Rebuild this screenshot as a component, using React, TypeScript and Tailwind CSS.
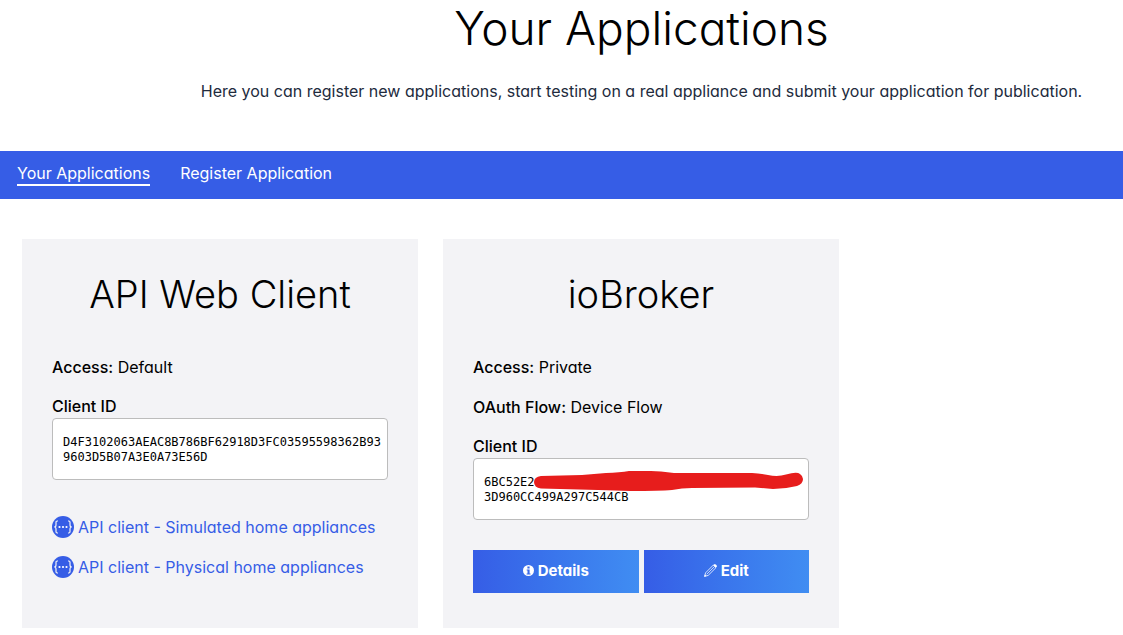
import type { ReactNode } from "react";

function SwaggerIcon() {
  return (
    <svg viewBox="0 0 22 22" className="size-[22px] shrink-0" aria-hidden="true">
      <circle cx="11" cy="11" r="11" fill="#365de6" />
      <g fill="none" stroke="#f3f3f6" strokeWidth="1.2">
        <path d="M6 5H5.2Q4 5 4 6.2V9Q4 11 2.200 11Q4 11 4 13V15.8Q4 17 5.2 17H6" />
        <path d="M16 5h.8q1.2 0 1.2 1.2V9q0 2 1.8 2q-1.8 0-1.8 2v2.8q0 1.2-1.2 1.2h-.8" />
      </g>
      <g fill="#ffffff">
        <circle cx="7.5" cy="11" r="1.1" />
        <circle cx="11" cy="11" r="1.1" />
        <circle cx="14.5" cy="11" r="1.1" />
      </g>
    </svg>
  );
}

function InfoIcon() {
  return (
    <svg viewBox="0 0 11 12" className="h-3 w-[11px]" aria-hidden="true">
      <circle cx="5.5" cy="5.5" r="5.5" fill="#ffffff" />
      <path d="M4.4 1.6h2.2v1.8H4.4zM3.7 4.4h2.9v4h.9v1.2H3.6V8.4h.9V5.6h-.8z" fill="#3a69e8" />
    </svg>
  );
}

function PencilIcon() {
  return (
    <svg viewBox="0 0 13 13" className="size-[13px]" fill="none" stroke="#e7eefe" aria-hidden="true">
      <path d="M.6 12.4l1-3.6L9.4 1l2.6 2.6-7.8 7.8z" strokeWidth=".9" />
      <path d="M2.7 10.3l7.6-7.6" strokeWidth=".8" />
      <path d="M9.200 1.200l2.600 2.600L13 2.500Q13 .5 10.800 0z" fill="#ffffff" stroke="none" />
      <path d="M.2 12.800l.7-2.300 1.600 1.600z" fill="#ffffff" stroke="none" />
    </svg>
  );
}

function Redaction() {
  return (
    <svg viewBox="534 471 269 20" className="absolute top-3 left-[60px] h-5 w-[269px]" aria-hidden="true">
      <path
        d="M541 476L582 475L606 473Q620 472.500 629 471Q646 470.500 661 471.500L674 473L752 473Q760 473.500 768 475Q778 477 786 474.500Q797 471.500 800 474Q803 476 803 479Q803 484 797 486Q785 489 773 489L755 487.500L692 488Q682 488 672 490Q660 491 630 491L598 490L541 488.500Q534 487.500 534 482Q534 477 541 476Z"
        fill="#e71d1c"
      />
    </svg>
  );
}

function Card({ title, children }: { title: string; children: ReactNode }) {
  return (
    <article className="min-h-[389px] bg-[#f3f3f6] px-[30px] pt-8">
      <h2 className="mb-[38px] text-center text-[38px] leading-[46px] font-light">{title}</h2>
      {children}
    </article>
  );
}

function Field({ name, value }: { name: string; value: string }) {
  return (
    <p className="mb-4">
      <b className="font-medium">{name}:</b> {value}
    </p>
  );
}

function ClientId({ lines, children }: { lines: string[]; children?: ReactNode }) {
  return (
    <div>
      <h3 className="leading-[23px] font-medium">Client ID</h3>
      <div className="relative h-[62px] rounded border border-[#bcbcbc] bg-white pt-4 pl-[10px] font-['DejaVu_Sans_Mono',monospace] text-xs leading-[15px] whitespace-nowrap">
        {lines.map((line) => (
          <div key={line}>{line}</div>
        ))}
        {children}
      </div>
    </div>
  );
}

const actionClass =
  "flex h-[43px] flex-1 items-center justify-center gap-1 bg-linear-to-r from-[#365de6] to-[#408df2] pb-0.5 text-[15px] font-bold text-white";

export default function App() {
  return (
    <div className="overflow-hidden bg-white pb-2 font-[Inter,sans-serif] text-base leading-6 text-black [font-feature-settings:'cv11']">
      <header className="flex h-[151px] flex-col items-center pl-40">
        <h1 className="text-[46px] leading-[56px] font-light">Your Applications</h1>
        <p className="mt-[23px] whitespace-nowrap text-[#222b3d]">
          Here you can register new applications, start testing on a real appliance and submit your application for
          publication.
        </p>
      </header>
      <nav className="flex h-12 items-center gap-[30px] bg-[#365de6] px-[17px] pb-0.5 leading-[22px] text-white">
        <a href="#apps" aria-current="page" className="border-b-2 border-white">
          Your Applications
        </a>
        <a href="#register" className="border-b-2 border-transparent">
          Register Application
        </a>
      </nav>
      <main className="grid grid-cols-2 gap-[25px] pt-10 pr-[284px] pl-[22px]">
        <Card title="API Web Client">
          <Field name="Access" value="Default" />
          <ClientId lines={["D4F3102063AEAC8B786BF62918D3FC03595598362B93", "9603D5B07A3E0A73E56D"]} />
          <div className="mt-[35px] flex flex-col gap-4 whitespace-nowrap text-[#365de6]">
            <a href="#simulated" className="flex items-center gap-1">
              <SwaggerIcon />
              API client - Simulated home appliances
            </a>
            <a href="#physical" className="flex items-center gap-1">
              <SwaggerIcon />
              API client - Physical home appliances
            </a>
          </div>
        </Card>
        <Card title="ioBroker">
          <Field name="Access" value="Private" />
          <Field name="OAuth Flow" value="Device Flow" />
          <ClientId lines={["6BC52E2", "3D960CC499A297C544CB"]}>
            <Redaction />
          </ClientId>
          <div className="mt-[30px] flex gap-[5px]">
            <button type="button" className={actionClass}>
              <InfoIcon />
              Details
            </button>
            <button type="button" className={actionClass}>
              <PencilIcon />
              Edit
            </button>
          </div>
        </Card>
      </main>
    </div>
  );
}
